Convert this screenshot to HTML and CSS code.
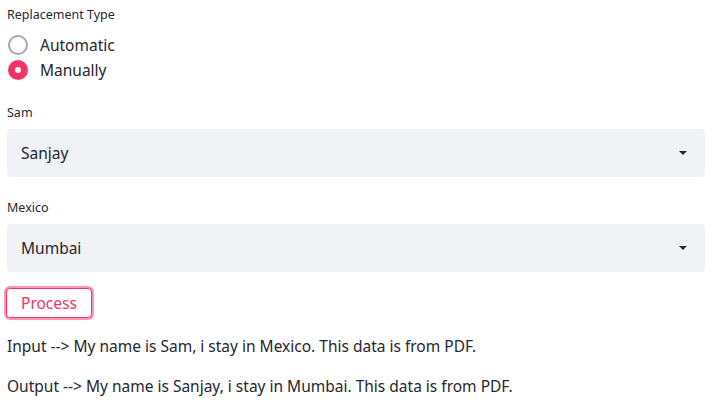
FILE: index.html
```html
<!DOCTYPE html>
<html>
<head>
<meta charset="utf-8">
<link rel="stylesheet" href="styles.css">
</head>
<body>
<div class="app">
  <div class="field">
    <div class="label">Replacement Type</div>
    <div class="radios">
      <div class="radio"><span class="dot off"></span><span>Automatic</span></div>
      <div class="radio"><span class="dot on"></span><span>Manually</span></div>
    </div>
  </div>
  <div class="field sel1">
    <div class="label">Sam</div>
    <div class="select"><span>Sanjay</span>
      <svg class="caret" width="10" height="6" viewBox="0 0 10 6"><path d="M1 1h8L5 5z" fill="#262730"/></svg>
    </div>
  </div>
  <div class="field sel2">
    <div class="label">Mexico</div>
    <div class="select"><span>Mumbai</span>
      <svg class="caret" width="10" height="6" viewBox="0 0 10 6"><path d="M1 1h8L5 5z" fill="#262730"/></svg>
    </div>
  </div>
  <div class="btnrow"><button class="btn">Process</button></div>
  <p class="txt first">Input --&gt; My name is Sam, i stay in Mexico. This data is from PDF.</p>
  <p class="txt">Output --&gt; My name is Sanjay, i stay in Mumbai. This data is from PDF.</p>
</div>
</body>
</html>
```
FILE: styles.css
```css
html, body { margin: 0; padding: 0; background: #fff; }
body { font-family: "Noto Sans", "Open Sans", sans-serif; color: #262730; }
.app { padding: 0 14px 0 7px; display: flex; flex-direction: column; }
.label { font-size: 12.5px; line-height: 16px; height: 16px; }
.field:first-child { padding-top: 7px; }
.radios { display: flex; flex-direction: column; margin-top: 9px; }
.radio { display: flex; align-items: center; height: 25px; font-size: 15.5px; }
.dot { width: 20px; height: 20px; box-sizing: border-box; border-radius: 50%; margin: 0 12px 0 1px; position: relative; }
.dot.off { border: 2px solid #a3a8b8; }
.dot.on { background: #f63366; }
.dot.on::after { content: ""; position: absolute; left: 7px; top: 7px; width: 6px; height: 6px; border-radius: 50%; background: #fff; }
.sel1 { margin-top: 23px; }
.sel2 { margin-top: 23px; }
.select { margin-top: 8px; height: 48px; background: #f0f2f6; border-radius: 4px; display: flex; align-items: center; justify-content: space-between; padding: 0 17px 0 14px; font-size: 15.5px; }
.caret { display: block; }
.btnrow { margin-top: 16px; }
.btn { font-family: inherit; font-size: 15.5px; color: #f63366; background: #fff; border: 1px solid #f63366; border-radius: 4px; height: 30px; padding: 0 14px; margin-left: -1px; box-shadow: 0 0 0 2px rgba(246,51,102,0.5); line-height: 26px; }
.txt { margin: 0; font-size: 15.5px; line-height: 24px; }
.txt.first { margin-top: 16px; }
.txt + .txt { margin-top: 16px; }
```
